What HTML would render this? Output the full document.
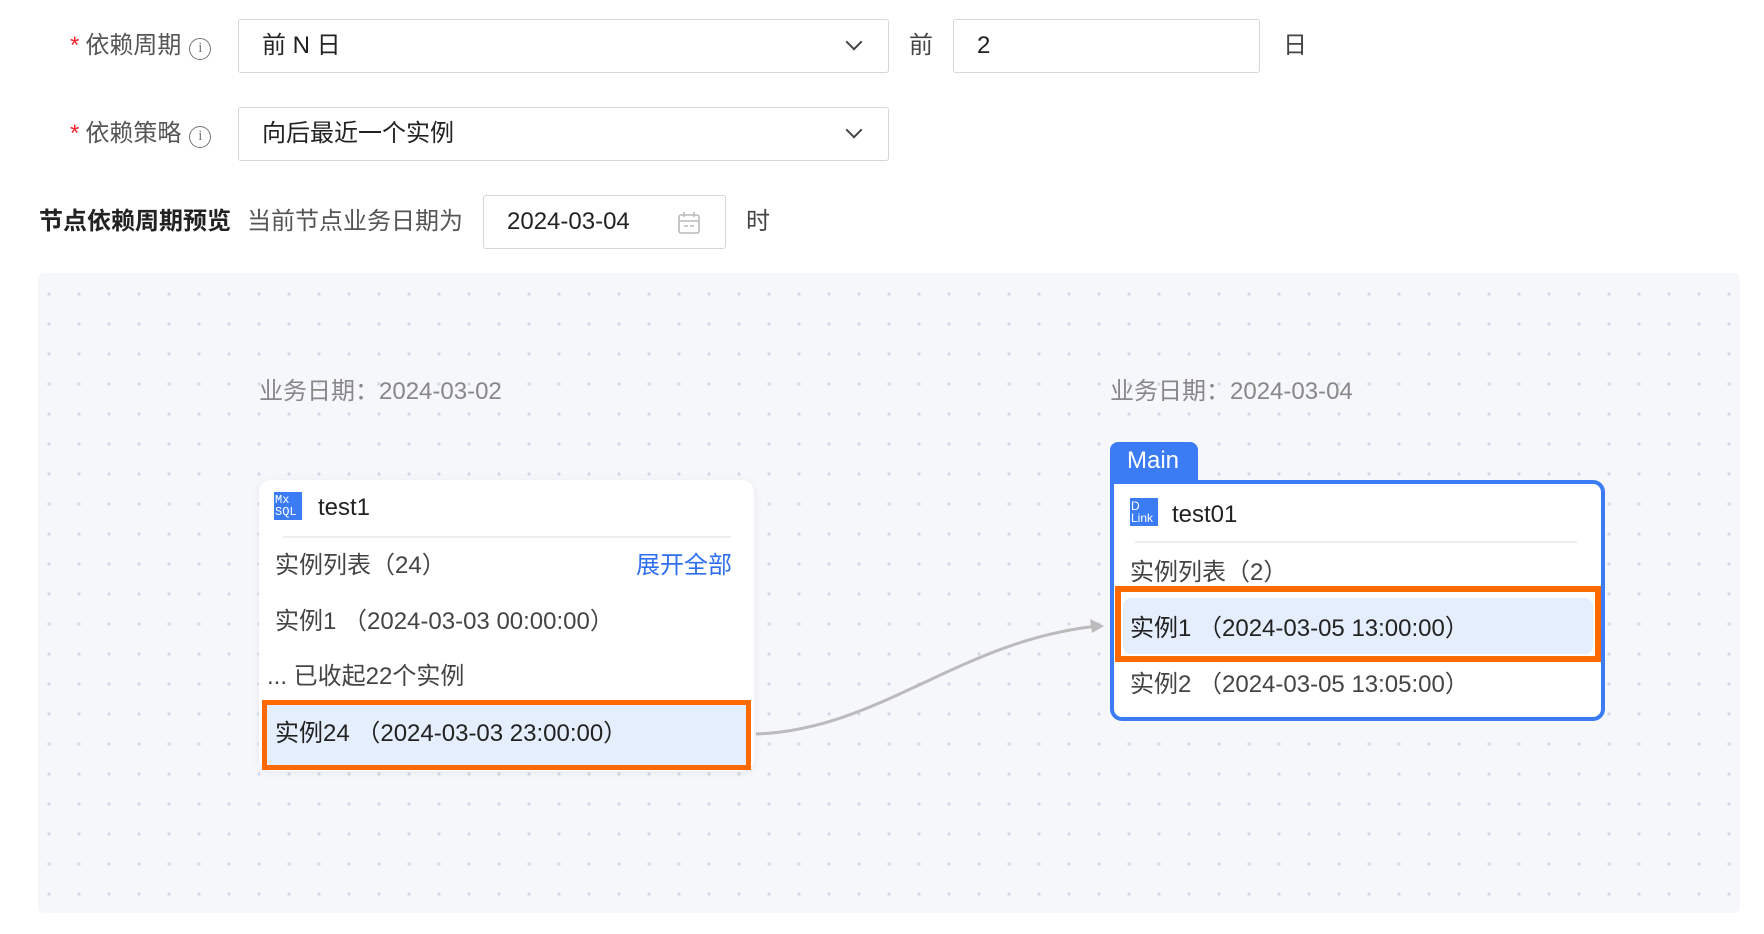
<!DOCTYPE html>
<html><head><meta charset="utf-8"><style>
*{box-sizing:border-box;margin:0;padding:0}
body{width:1764px;height:934px;background:#fff;position:relative;overflow:hidden;font-family:"Liberation Sans","Noto Sans CJK SC",sans-serif;color:#333;font-size:24px}
.a{position:absolute;white-space:nowrap}
.lbl{color:#555;line-height:30px}
.req{color:#f5222d;margin-right:6px}
.info{display:inline-block;width:22px;height:22px;border:1.8px solid #777;border-radius:50%;font-size:15px;line-height:19px;text-align:center;color:#777;font-family:"Liberation Serif",serif;vertical-align:1px;margin-left:8px}
.box{position:absolute;border:1.5px solid #d6d6d6;border-radius:3px;background:#fff;line-height:51px;padding-left:23px;color:#222}
.chev{position:absolute;right:28px;top:16px;width:12px;height:12px;border-right:2px solid #444;border-bottom:2px solid #444;transform:rotate(45deg)}
.canvas{position:absolute;left:38px;top:273px;width:1702px;height:640px;border-radius:6px;background-color:#f6f7fb;background-image:radial-gradient(circle,#d3d9e8 1.5px,transparent 1.9px);background-size:30px 30px;background-position:-4px 6px}
.card{position:absolute;background:#fff;border-radius:12px}
.row{position:absolute;left:16px;line-height:30px;color:#444}
</style></head><body>
<div class="a lbl" style="left:70px;top:31px"><span class="req">*</span>依赖周期<span class="info">i</span></div>
<div class="box" style="left:238px;top:19px;width:651px;height:54px">前 N 日<div class="chev"></div></div>
<div class="a lbl" style="left:909px;top:31px;color:#444">前</div>
<div class="box" style="left:953px;top:19px;width:307px;height:54px">2</div>
<div class="a lbl" style="left:1283px;top:31px;color:#444">日</div>

<div class="a lbl" style="left:70px;top:119px"><span class="req">*</span>依赖策略<span class="info">i</span></div>
<div class="box" style="left:238px;top:107px;width:651px;height:54px">向后最近一个实例<div class="chev"></div></div>

<div class="a" style="left:39px;top:207px;font-weight:bold;color:#222;line-height:30px">节点依赖周期预览</div>
<div class="a lbl" style="left:247px;top:207px">当前节点业务日期为</div>
<div class="box" style="left:483px;top:195px;width:243px;height:54px">2024-03-04
<svg style="position:absolute;right:24px;top:15px" width="24" height="24" viewBox="0 0 24 24" fill="none" stroke="#bbb" stroke-width="1.6"><rect x="2" y="4" width="20" height="18" rx="2"/><path d="M2 10h20M7 1v5M17 1v5M7 15h4M13 15h4"/></svg></div>
<div class="a lbl" style="left:746px;top:207px;color:#444">时</div>

<div class="canvas"></div>
<div class="a" style="left:259px;top:377px;color:#888;line-height:30px">业务日期：2024-03-02</div>
<div class="a" style="left:1110px;top:377px;color:#888;line-height:30px">业务日期：2024-03-04</div>

<svg class="a" style="left:0;top:0" width="1764" height="934"><path d="M756 734 C 880 730, 960 640, 1098 626" fill="none" stroke="#bbb" stroke-width="3"/><path d="M1104 626 L1090 619 L1092 633 Z" fill="#bbb"/></svg>

<div class="card" style="left:259px;top:480px;width:495px;height:291px;box-shadow:0 2px 10px rgba(0,0,0,.06)">
  <div class="a" style="left:15px;top:12px;width:28px;height:28px;background:#3b7cf5;color:#fff;font-size:12px;line-height:12px;font-family:'Liberation Mono',monospace;padding:2px 1px">Mx<br>SQL</div>
  <div class="a" style="left:59px;top:13px;line-height:30px;color:#222">test1</div>
  <div class="a" style="left:24px;top:56px;width:448px;height:2px;background:#eee"></div>
  <div class="row" style="top:71px">实例列表（24）</div>
  <div class="a" style="right:22px;top:71px;line-height:30px;color:#2f6fef">展开全部</div>
  <div class="row" style="top:127px">实例1 （2024-03-03 00:00:00）</div>
  <div class="row" style="top:182px;left:8px">... 已收起22个实例</div>
  <div class="a" style="left:3px;top:220px;width:489px;height:70px;border:5px solid #ff6a00;background:#e4eefc"></div>
  <div class="row" style="top:239px;color:#222">实例24 （2024-03-03 23:00:00）</div>
</div>

<div class="a" style="left:1110px;top:442px;width:88px;height:44px;background:#3b7cf5;border-radius:8px 8px 0 0;color:#fff;line-height:38px;padding-left:17px;font-size:24px">Main</div>
<div class="card" style="left:1110px;top:480px;width:495px;height:241px;border:4px solid #3b7cf5;border-top-left-radius:0">
  <div class="a" style="left:16px;top:14px;width:28px;height:28px;background:#3b7cf5;color:#fff;font-size:12px;line-height:12px;padding:2px 1px">D<br>Link</div>
  <div class="a" style="left:58px;top:16px;line-height:30px;color:#222">test01</div>
  <div class="a" style="left:21px;top:57px;width:442px;height:2px;background:#eee"></div>
  <div class="row" style="top:74px">实例列表（2）</div>
  <div class="a" style="left:1px;top:102px;width:486px;height:76px;border:6px solid #ff6a00;background:#fff"><div style="position:absolute;left:2px;top:6px;right:2px;bottom:2px;background:#e4eefc;border-radius:8px"></div></div>
  <div class="row" style="top:130px;color:#222">实例1 （2024-03-05 13:00:00）</div>
  <div class="row" style="top:186px">实例2 （2024-03-05 13:05:00）</div>
</div>
</body></html>
